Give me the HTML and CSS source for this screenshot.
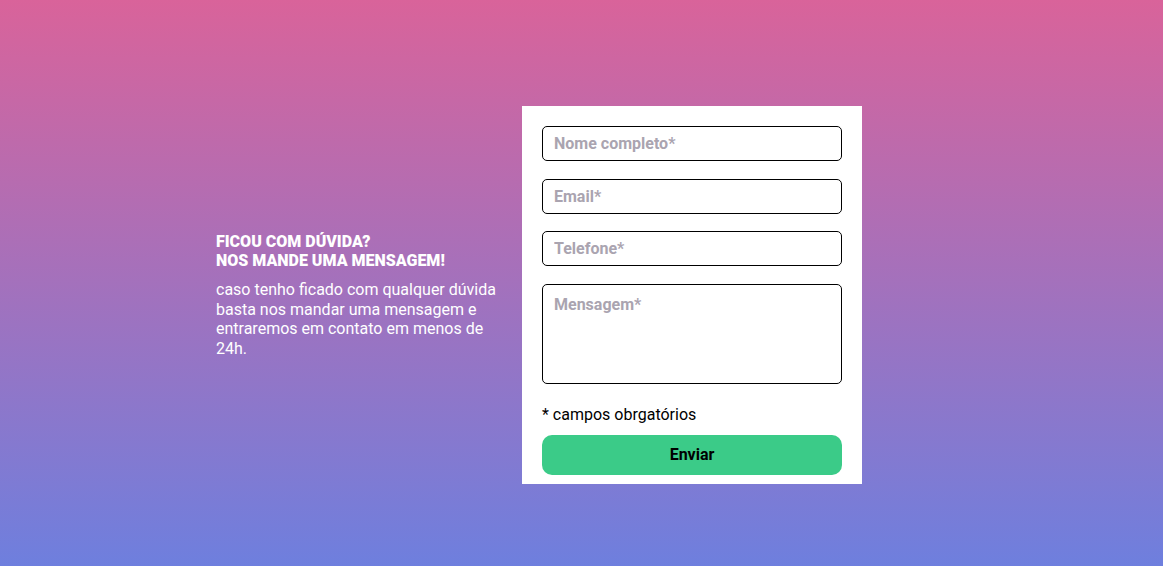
FILE: index.html
```html
<!DOCTYPE html>
<html lang="pt-BR">
<head>
<meta charset="utf-8">
<title>Contato</title>
<link rel="stylesheet" href="styles.css">
</head>
<body>
<main class="page">
  <section class="intro">
    <h2 class="intro-title">Ficou com dúvida?<br>Nos mande uma mensagem!</h2>
    <p class="intro-text">caso tenho ficado com qualquer dúvida basta nos mandar uma mensagem e entraremos em contato em menos de 24h.</p>
  </section>
  <form class="card">
    <input class="field" type="text" placeholder="Nome completo*">
    <input class="field" type="email" placeholder="Email*">
    <input class="field" type="tel" placeholder="Telefone*">
    <textarea class="field area" placeholder="Mensagem*"></textarea>
    <p class="note">* campos obrgatórios</p>
    <button class="send" type="button">Enviar</button>
  </form>
</main>
</body>
</html>
```

FILE: styles.css
```css
* { box-sizing: border-box; }
html, body { margin: 0; height: 100%; }
body {
  font-family: Roboto, "Liberation Sans", sans-serif;
  background: linear-gradient(180deg, #d9639a 0%, #6e7fde 100%);
  min-height: 566px;
}
.page {
  display: flex;
  align-items: center;
  min-height: 566px;
  padding: 24px 0 0 216px;
  gap: 16px;
}
.intro {
  width: 290px;
  color: #fff;
}
.intro-title {
  margin: 0 0 10px;
  font-size: 16px;
  line-height: 19px;
  font-weight: 900;
  text-transform: uppercase;
}
.intro-text {
  margin: 0;
  font-size: 16px;
  line-height: 19.5px;
}
.card {
  width: 340px;
  background: #fff;
  padding: 20px 20px 9px;
  display: flex;
  flex-direction: column;
}
.field {
  display: block;
  width: 300px;
  height: 35px;
  margin: 0 0 17.4px;
  border: 1px solid #000;
  border-radius: 5px;
  padding: 0 11px;
  font-family: Roboto, "Liberation Sans", sans-serif;
  font-size: 16px;
  font-weight: 700;
  color: #333;
  outline: none;
}
.field::placeholder { color: #aaa4b0; }
.area {
  height: 100px;
  padding-top: 10px;
  resize: none;
  margin-bottom: 21px;
}
.note {
  margin: 0 0 11px;
  font-size: 16px;
  line-height: 19px;
  color: #000;
}
.send {
  height: 40px;
  width: 300px;
  border: none;
  border-radius: 10px;
  background: #3bcb88;
  color: #000;
  font-family: Roboto, "Liberation Sans", sans-serif;
  font-size: 16px;
  font-weight: 700;
  cursor: pointer;
}
```
